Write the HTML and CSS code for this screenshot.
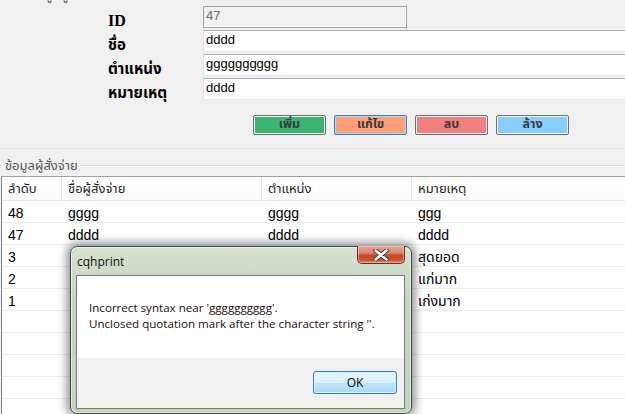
FILE: index.html
```html
<!DOCTYPE html>
<html lang="th">
<head>
<meta charset="utf-8">
<title>cqhprint</title>
<link rel="stylesheet" href="styles.css">
</head>
<body>
<div class="screen">
  <section class="edit-group">
    <div class="cut-title"><span>แก้ไขข้อมูลผู้สั่งจ่าย</span></div>
    <div class="form">
      <span class="label latin">ID</span>
      <div class="field readonly">47</div>
      <span class="label">ชื่อ</span>
      <div class="field wide">dddd</div>
      <span class="label">ตำแหน่ง</span>
      <div class="field wide">gggggggggg</div>
      <span class="label">หมายเหตุ</span>
      <div class="field wide">dddd</div>
    </div>
    <div class="buttons">
      <button class="btn green">เพิ่ม</button>
      <button class="btn salmon focused">แก้ไข</button>
      <button class="btn coral">ลบ</button>
      <button class="btn sky">ล้าง</button>
    </div>
  </section>

  <section class="list-group">
    <div class="legend"><span class="legend-lead"></span><span class="legend-text">ข้อมูลผู้สั่งจ่าย</span><span class="legend-line"></span></div>
    <div class="grid">
      <div class="row head">
        <div class="c1">ลำดับ</div><div class="c2">ชื่อผู้สั่งจ่าย</div><div class="c3">ตำแหน่ง</div><div class="c4">หมายเหตุ</div>
      </div>
      <div class="row"><div class="c1">48</div><div class="c2">gggg</div><div class="c3">gggg</div><div class="c4">ggg</div></div>
      <div class="row"><div class="c1">47</div><div class="c2">dddd</div><div class="c3">dddd</div><div class="c4">dddd</div></div>
      <div class="row"><div class="c1">3</div><div class="c2"></div><div class="c3"></div><div class="c4">สุดยอด</div></div>
      <div class="row"><div class="c1">2</div><div class="c2"></div><div class="c3"></div><div class="c4">แก่มาก</div></div>
      <div class="row"><div class="c1">1</div><div class="c2"></div><div class="c3"></div><div class="c4">เก่งมาก</div></div>
      <div class="row"><div class="c1"></div><div class="c2"></div><div class="c3"></div><div class="c4"></div></div>
      <div class="row"><div class="c1"></div><div class="c2"></div><div class="c3"></div><div class="c4"></div></div>
      <div class="row"><div class="c1"></div><div class="c2"></div><div class="c3"></div><div class="c4"></div></div>
      <div class="row"><div class="c1"></div><div class="c2"></div><div class="c3"></div><div class="c4"></div></div>
    </div>
  </section>

  <div class="dialog">
    <div class="titlebar">cqhprint</div>
    <div class="close-btn">
      <svg width="16" height="12" viewBox="0 0 16 12">
        <path d="M2.5 1.5 L13.5 10.5 M13.5 1.5 L2.5 10.5" stroke="#3b3b3b" stroke-width="4.6" stroke-linecap="round" fill="none"/>
        <path d="M2.5 1.5 L13.5 10.5 M13.5 1.5 L2.5 10.5" stroke="#ffffff" stroke-width="2.6" stroke-linecap="round" fill="none"/>
      </svg>
    </div>
    <div class="client">
      <div class="message">
        <p>Incorrect syntax near 'gggggggggg'.</p>
        <p>Unclosed quotation mark after the character string ''.</p>
      </div>
      <div class="footer">
        <button class="ok">OK</button>
      </div>
    </div>
  </div>
</div>
</body>
</html>
```
FILE: styles.css
```css
html, body {
  margin: 0;
  padding: 0;
}
body {
  width: 625px;
  height: 414px;
  overflow: hidden;
  background: #f0f0f0;
  font-family: "Liberation Sans", "Noto Sans Thai", "Noto Sans", sans-serif;
  color: #000;
}
.screen {
  position: relative;
  width: 625px;
  height: 414px;
  overflow: hidden;
}

/* ---------- edit group ---------- */
.edit-group {
  height: 149px;
  box-sizing: border-box;
  border-bottom: 1px solid #dcdfe3;
}
.cut-title {
  height: 4px;
  overflow: hidden;
  padding-left: 4px;
  font-size: 13px;
  color: #444;
}
.cut-title span {
  display: block;
  line-height: 16px;
  margin-top: -12px;
}
.form {
  margin-top: 2px;
  padding-left: 108px;
  display: grid;
  grid-template-columns: 95px 1fr;
  row-gap: 2px;
}
.label {
  font-size: 15px;
  font-weight: bold;
  line-height: 22px;
  padding-top: 4px;
  height: 22px;
  box-sizing: border-box;
  white-space: nowrap;
}
.label.latin {
  font-family: "Liberation Serif", serif;
  font-size: 16px;
}
.field {
  height: 22px;
  box-sizing: border-box;
  background: #fff;
  border-top: 1px solid #abadb3;
  border-left: 1px solid #e2e3ea;
  border-bottom: 1px solid #e3e9ef;
  font-size: 13px;
  line-height: 18px;
  padding-left: 2px;
  white-space: nowrap;
}
.field.readonly {
  width: 204px;
  background: #f0f0f0;
  color: #6d6d6d;
  border: 1px solid #a0a0a0;
  box-shadow: inset -1px -1px 0 #ffffff;
}
.field.wide {
  width: 440px;
}
.buttons {
  margin-top: 15px;
  padding-left: 253px;
  display: flex;
  gap: 8px;
}
.btn {
  width: 73px;
  height: 20px;
  padding: 0;
  border: 1px solid #707070;
  border-radius: 2px;
  box-shadow: inset 0 0 0 1px #f4f4f4;
  font-family: "Noto Sans Thai", "Liberation Sans", sans-serif;
  font-size: 12.5px;
  font-weight: bold;
  color: #3a3a3a;
  line-height: 16px;
}
.btn.green { background: #3cb371; }
.btn.salmon { background: #ffa07a; }
.btn.coral { background: #f08080; }
.btn.sky { background: #87cefa; }
.btn.focused {
  border-color: #3c7fb1;
  box-shadow: inset 0 0 0 1px #a9dcf6;
}

/* ---------- list group ---------- */
.list-group {
  padding-top: 8px;
}
.legend {
  display: flex;
  align-items: center;
  height: 17px;
  font-size: 13px;
  color: #555;
}
.legend-lead {
  width: 3px;
  border-top: 1px solid #dcdfe3;
  border-bottom: 1px solid #fff;
}
.legend-text {
  padding: 0 2px;
  white-space: nowrap;
}
.legend-line {
  flex: 1;
  border-top: 1px solid #dcdfe3;
  border-bottom: 1px solid #fff;
}
.grid {
  margin-top: 2px;
  margin-left: 1px;
  border-left: 1px solid #828790;
  border-top: 1px solid #a0a0a0;
  background: #fff;
  height: 260px;
  overflow: hidden;
}
.row {
  display: flex;
  height: 22px;
  box-sizing: border-box;
  border-bottom: 1px solid #ececec;
  font-size: 14px;
  line-height: 20px;
  white-space: nowrap;
}
.row > div {
  flex: none;
  padding-left: 6px;
  padding-top: 2px;
  box-sizing: border-box;
  overflow: hidden;
}
.c1 { width: 60px; }
.c2 { width: 200px; }
.c3 { width: 150px; }
.c4 { width: 230px; }
.row.head {
  height: 24px;
  font-size: 13px;
  line-height: 20px;
  color: #1e1e1e;
  border-bottom: 1px solid #e5e5e5;
  background: linear-gradient(#ffffff, #fbfbfc);
}
.row.head > div {
  border-right: 1px solid #e5e5e5;
}

/* ---------- dialog ---------- */
.dialog {
  position: absolute;
  left: 70px;
  top: 246px;
  width: 342px;
  height: 168px;
  box-sizing: border-box;
  border: 1px solid #3e4a3e;
  border-radius: 7px;
  background: linear-gradient(180deg, #d6e1d0 0%, #c7d7bf 30%, #c3d3bb 100%);
  box-shadow: 0 0 10px 3px rgba(0, 0, 0, 0.45), inset 0 0 0 1px rgba(255, 255, 255, 0.55);
  font-family: "Open Sans", "Liberation Sans", sans-serif;
}
.titlebar {
  height: 28px;
  box-sizing: border-box;
  padding: 6px 0 0 6px;
  font-size: 12px;
  line-height: 18px;
  color: #111;
}
.close-btn {
  position: absolute;
  left: 286px;
  top: -1px;
  width: 48px;
  height: 18px;
  box-sizing: border-box;
  border: 1px solid #6a2d22;
  border-top: none;
  border-radius: 0 0 5px 5px;
  background: linear-gradient(180deg, #e9a795 0%, #d88671 40%, #c54a2c 55%, #c8502f 80%, #e08a6c 100%);
  box-shadow: inset 0 0 0 1px rgba(255, 220, 210, 0.45);
  display: flex;
  align-items: center;
  justify-content: center;
}
.close-btn svg {
  display: block;
}
.client {
  margin-left: 5px;
  width: 329px;
  height: 134px;
  box-sizing: border-box;
  border: 1px solid #6f7e6f;
  display: flex;
  flex-direction: column;
}
.message {
  height: 82px;
  box-sizing: border-box;
  background: #fff;
  padding: 24px 0 0 12px;
  font-size: 11.6px;
  line-height: 16px;
  color: #1c0c0c;
}
.message p {
  margin: 0;
  white-space: nowrap;
}
.footer {
  flex: 1;
  background: #f0f0f0;
  display: flex;
  justify-content: flex-end;
  align-items: flex-start;
  padding: 13px 7px 0 0;
}
.ok {
  width: 84px;
  height: 23px;
  padding: 0;
  border: 1px solid #3c7fb1;
  border-radius: 3px;
  background: linear-gradient(180deg, #eaf6fd 0%, #d9f0fc 50%, #bee6fd 51%, #a7d9f5 100%);
  box-shadow: inset 0 0 0 1px #d6f0fd;
  font-family: "Open Sans", "Liberation Sans", sans-serif;
  font-size: 12px;
  color: #000;
}
```
